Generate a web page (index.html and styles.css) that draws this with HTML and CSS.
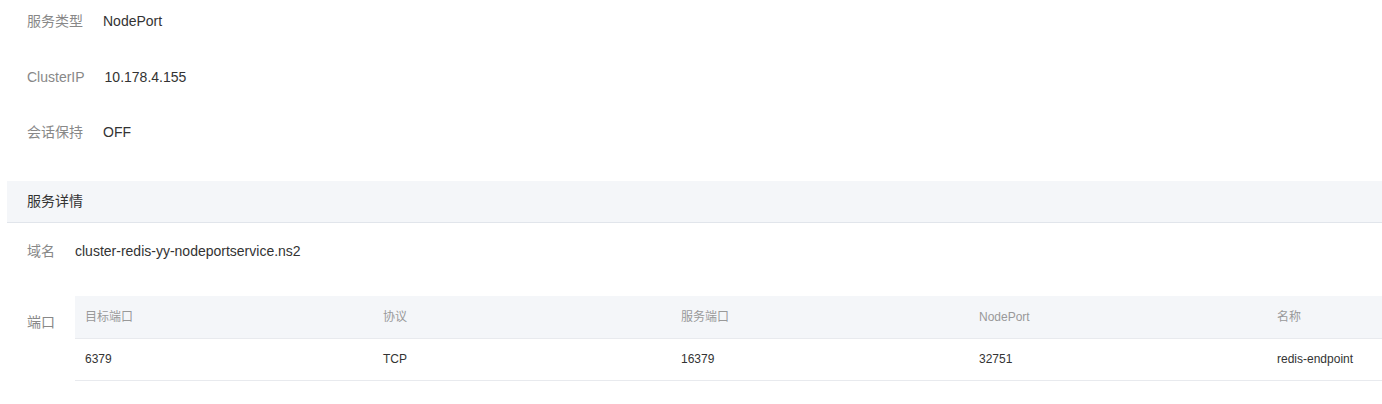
FILE: index.html
```html
<!DOCTYPE html>
<html>
<head>
<meta charset="utf-8">
<link rel="stylesheet" href="styles.css">
</head>
<body>
<div class="page">
  <div class="info">
    <div class="row"><span class="label">服务类型</span><span class="value">NodePort</span></div>
    <div class="row"><span class="label">ClusterIP</span><span class="value">10.178.4.155</span></div>
    <div class="row"><span class="label">会话保持</span><span class="value">OFF</span></div>
  </div>
  <div class="section-title">服务详情</div>
  <div class="details">
    <div class="row"><span class="label">域名</span><span class="value">cluster-redis-yy-nodeportservice.ns2</span></div>
    <div class="row port-row">
      <span class="label port-label">端口</span>
      <table class="ports">
        <thead>
          <tr><th class="c1">目标端口</th><th class="c2">协议</th><th class="c3">服务端口</th><th class="c4">NodePort</th><th class="c5">名称</th></tr>
        </thead>
        <tbody>
          <tr><td>6379</td><td>TCP</td><td>16379</td><td>32751</td><td>redis-endpoint</td></tr>
        </tbody>
      </table>
    </div>
  </div>
</div>
</body>
</html>
```
FILE: styles.css
```css
html, body {
  margin: 0;
  padding: 0;
  background: #fff;
}
body {
  font-family: "Liberation Sans", "Noto Sans CJK SC", sans-serif;
  font-size: 14px;
  color: #333;
}
.page {
  padding-left: 7px;
}
.info {
  padding-top: 11px;
  padding-bottom: 39px;
}
.row {
  display: flex;
  align-items: flex-start;
  padding-left: 20px;
  line-height: 20px;
}
.info .row {
  margin-bottom: 35.5px;
}
.info .row:last-child {
  margin-bottom: 0;
}
.label {
  color: #888;
  margin-right: 20px;
  white-space: nowrap;
}
.value {
  color: #333;
}
.section-title {
  height: 42px;
  box-sizing: border-box;
  background: #f4f6f9;
  border-bottom: 1px solid #e1e5eb;
  padding-left: 20px;
  line-height: 41px;
  color: #333;
}
.details {
  padding-top: 18px;
}
.port-row {
  margin-top: 35px;
}
.port-label {
  margin-top: 16px;
}
.ports {
  flex: 1;
  border-collapse: collapse;
  font-size: 12px;
  table-layout: fixed;
}
.ports th, .ports td {
  text-align: left;
  padding: 0 0 0 10px;
  height: 42px;
  box-sizing: border-box;
  border-bottom: 1px solid #e8eaee;
  font-weight: normal;
  white-space: nowrap;
}
.ports th {
  background: #f4f6f9;
  color: #999;
}
.ports td {
  color: #333;
}
.c1, .c2, .c3, .c4 {
  width: 298px;
}
```
